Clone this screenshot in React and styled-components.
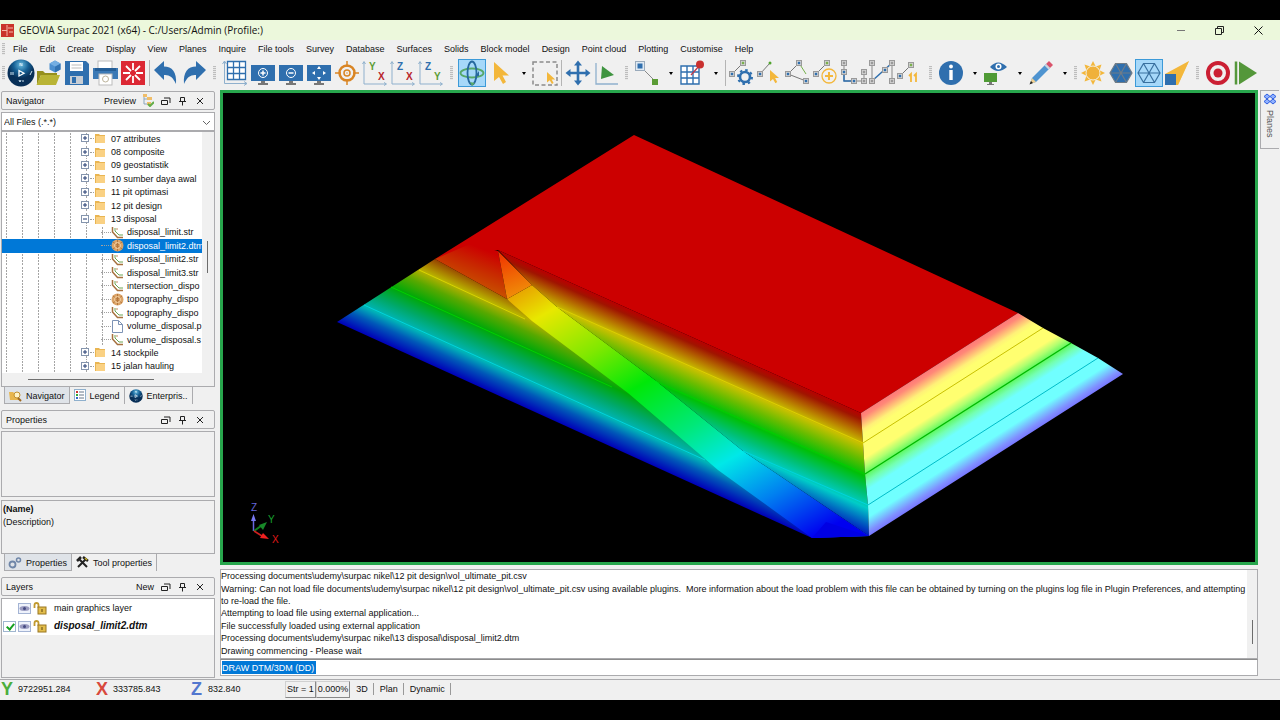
import React from "react";
import styled, { createGlobalStyle, css } from "styled-components";

const Global = createGlobalStyle`
  * { box-sizing: border-box; }
  body { margin: 0; background: #000; color: #111; font: 9px/12px "Liberation Sans", Arial, sans-serif; }
  button, input, select { font: inherit; color: inherit; }
`;

const LINE = "#ababae";
const BLUE = "#2f6fae";
const YEL = "#f3b73b";

/* ---------- frame ---------- */
const Page = styled.div`
  min-height: 100vh;
  display: flex;
  padding: 20px 0;
  background: #000;
`;
const Window = styled.div`
  flex: 1;
  min-width: 0;
  display: flex;
  flex-direction: column;
  background: #f0f0f0;
`;
const TitleBar = styled.header`
  display: flex;
  align-items: center;
  height: 20px;
  padding: 0 2px 0 1px;
  background: #ecf8dc;
  font: 10px/20px "Open Sans", "Noto Sans", sans-serif;
`;
const Title = styled.h1`
  flex: 1;
  margin: 0 0 0 5px;
  font: inherit;
`;
const PlainButton = styled.button`
  display: flex;
  align-items: center;
  justify-content: center;
  padding: 0;
  border: 0;
  background: none;
`;
const CaptionButton = styled(PlainButton)`
  width: 39px;
  height: 20px;
`;
const MenuBar = styled.nav`
  display: flex;
  align-items: center;
  height: 18px;
`;
const MenuList = styled.div`
  display: flex;
  gap: 12px;
  margin-left: 6px;
`;
const MenuItem = styled(PlainButton)`
  white-space: nowrap;
`;
const Toolbar = styled.div`
  display: flex;
  align-items: center;
  height: 32px;
  padding-bottom: 2px;
  overflow: hidden;
`;
const ToolButton = styled(PlainButton)`
  flex: none;
  width: 28px;
  height: 28px;
  ${(p) => p.$on && css`background: #a6d8f9; box-shadow: inset 0 0 0 1px #3c9ad8;`}
`;
const Caret = styled(PlainButton)`
  flex: none;
  width: 17px;
  height: 28px;
  padding-left: 3px;
  &::after {
    content: "";
    border: 2px solid transparent;
    border-top: 3px solid #000;
    border-bottom: 0;
  }
`;
const Grip = styled.span`
  flex: none;
  width: ${(p) => (p.$tight ? 7 : 13)}px;
  display: flex;
  justify-content: center;
  &::before {
    content: "";
    width: 3px;
    height: ${(p) => p.$h || 14}px;
    background: repeating-linear-gradient(#bdbdbd 0 1px, #e8e8e8 1px 2px);
  }
`;
const Divider = styled.span`
  flex: none;
  width: 5px;
  height: 26px;
  background: linear-gradient(#b4b4b4, #b4b4b4) center / 1px 100% no-repeat;
`;

/* ---------- body ---------- */
const Body = styled.main`
  flex: 1;
  min-height: 0;
  display: grid;
  grid-template-columns: 216px minmax(0, 1fr) 20px;
  gap: 0 2px;
`;
const SideBar = styled.aside`
  display: flex;
  flex-direction: column;
  padding: 1px;
`;
const PanelHead = styled.div`
  display: flex;
  align-items: center;
  gap: 6px;
  height: 19px;
  margin-bottom: 2px;
  padding: 0 9px 0 4px;
  border: 1px solid ${LINE};
  border-radius: 2px;
`;
const PanelTitle = styled.h2`
  flex: 1;
  margin: 0;
  font: inherit;
`;
const HeadButton = styled(PlainButton)`
  min-width: 11px;
`;
const Filter = styled.div`
  position: relative;
  display: flex;
  height: 19px;
  border: 1px solid ${LINE};
  background: #fff;
  svg { position: absolute; right: 3px; top: 7px; pointer-events: none; }
`;
const FilterSelect = styled.select`
  flex: 1;
  padding: 0 2px;
  border: 0;
  appearance: none;
  background: transparent;
`;
const TreeBox = styled.div`
  display: grid;
  grid-template-columns: 1fr 12px;
  padding-bottom: 13px;
  border: 1px solid ${LINE};
  background: linear-gradient(#707070, #707070) 26px 247px / 126px 1px no-repeat, #f0f0f0;
`;
const Tree = styled.ul`
  display: grid;
  grid-auto-rows: minmax(0, 1fr);
  height: 241px;
  margin: 0;
  padding: 0;
  min-width: 0;
  overflow: hidden;
  list-style: none;
  background: #fff;
`;
const TreeRow = styled.li`
  display: flex;
  align-items: center;
  padding-left: ${(p) => (p.$file ? 99 : 79)}px;
  white-space: nowrap;
  background-image:
    repeating-linear-gradient(#fff 0 1px, transparent 1px 3px),
    repeating-linear-gradient(90deg, transparent 0 4px, #a4a4a4 4px 5px, transparent 5px 16px);
  background-size: ${(p) => (p.$file ? 101 : 85)}px 100%;
  background-repeat: no-repeat;
  ${(p) => p.$on && css`background: #0078d7; color: #fff;`}
`;
const Branch = styled.span`
  width: ${(p) => p.$w}px;
  border-top: 1px dotted #a0a0a0;
`;
const RowLabel = styled.span`
  margin-left: ${(p) => (p.$file ? 3 : 5)}px;
`;
const ScrollTrack = styled.div`
  background: linear-gradient(#6c6c6c, #6c6c6c) 5px ${(p) => p.$y}px / 1px ${(p) => p.$len}px no-repeat, #f0f0f0;
`;
const Tabs = styled.div`
  display: flex;
  height: 17px;
  padding-left: 3px;
  margin-bottom: 6px;
`;
const Tab = styled.button`
  display: flex;
  align-items: center;
  gap: 4px;
  padding: 0 4px;
  border: 0;
  border-right: 1px solid ${LINE};
  white-space: nowrap;
  background: ${(p) => (p.$on ? "#dfe3e8" : "transparent")};
  ${(p) => p.$on && css`box-shadow: inset 1px -1px 0 ${LINE};`}
`;
const PropertyBox = styled.div`
  height: ${(p) => p.$h}px;
  margin-bottom: ${(p) => p.$gap || 0}px;
  padding: 2px 1px;
  border: 1px solid ${LINE};
  line-height: 12px;
`;
const PropertyName = styled.strong`
  display: block;
  line-height: 13px;
`;
const LayerBox = styled.div`
  flex: 1;
  border: 1px solid ${LINE};
`;
const LayerRow = styled.label`
  display: flex;
  align-items: center;
  gap: 2px;
  height: 18px;
  padding-left: 1px;
  background: #fff;
  font: ${(p) => (p.$active ? "italic bold 10px" : "9px")} / 18px "Liberation Sans", sans-serif;
  span { margin-left: 5px; }
`;
const Tick = styled.input`
  appearance: none;
  width: 13px;
  height: 11px;
  margin: 0;
  &:checked {
    border: 1px solid #9fb6cf;
    background: #fff;
  }
  &:checked::after {
    content: "";
    display: block;
    width: 3px;
    height: 6px;
    margin: 0 0 0 4px;
    border: solid #16a020;
    border-width: 0 2px 2px 0;
    transform: rotate(40deg);
  }
`;

/* ---------- centre ---------- */
const Centre = styled.section`
  display: flex;
  flex-direction: column;
  min-width: 0;
  margin-left: 2px;
`;
const Viewport = styled.div`
  flex: 1;
  min-height: 0;
  display: flex;
  margin-bottom: 4px;
  border: 3px solid #27a64c;
  background: #000;
  svg { width: 100%; height: 100%; max-height: 469px; }
`;
const Console = styled.div`
  display: grid;
  grid-template-columns: 1fr 10px;
  height: 90px;
  border: 1px solid ${LINE};
  background: #fff;
`;
const LogLines = styled.ol`
  display: grid;
  grid-auto-rows: minmax(0, 1fr);
  align-items: center;
  margin: 0;
  padding: 0 0 1px;
  min-width: 0;
  list-style: none;
  white-space: pre;
  overflow: hidden;
`;
const CommandBar = styled.label`
  display: flex;
  align-items: center;
  height: 17px;
  margin-bottom: 3px;
  padding-left: 1px;
  border: 1px solid ${LINE};
  border-top-color: #8c8c8c;
  background: #fff;
`;
const CommandInput = styled.input`
  width: 94px;
  height: 13px;
  padding: 0;
  border: 0;
  background: #0078d7;
  color: #fff;
`;
const DockTab = styled.button`
  display: flex;
  align-items: center;
  gap: 5px;
  height: 59px;
  width: 19px;
  padding: 2px 0 0;
  border: 1px solid ${LINE};
  border-right: 0;
  background: #f0f0f0;
  color: #555;
  writing-mode: vertical-rl;
`;

/* ---------- status ---------- */
const StatusBar = styled.footer`
  display: flex;
  align-items: center;
  height: 21px;
  padding-bottom: 2px;
  border-top: 1px solid ${LINE};
`;
const Coordinate = styled.output`
  display: flex;
  align-items: center;
  gap: 4px;
  width: 95px;
  height: 18px;
  padding-left: 1px;
  white-space: nowrap;
`;
const AxisLetter = styled.b`
  width: 13px;
  color: ${(p) => p.$c};
  font: bold 18px/18px "Liberation Sans", sans-serif;
`;
const StatusBox = styled.span`
  height: 17px;
  padding: 0 1px;
  border: 1px solid #999;
  border-color: #d0d0d0 #888 #888 #d0d0d0;
  line-height: 15px;
`;
const StatusText = styled.span`
  padding: 0 5px 0 6px;
  border-right: 1px solid #999;
`;

/* ---------- toolbar drawings, on a 28 x 28 grid ---------- */
const Svg = ({ s = 28, children }) => (
  <svg width={s} height={s} viewBox="0 0 28 28" fill="none" aria-hidden="true">{children}</svg>
);
const Node = ({ x, y, c = BLUE }) => (
  <g>
    <rect x={x - 2.5} y={y - 2.5} width="5" height="5" fill="#d4d4d4" stroke="#9a9a9a" />
    <rect x={x - 1.2} y={y - 1.2} width="2.4" height="2.4" fill={c} />
  </g>
);
const Cursor = ({ x = 0, y = 0, k = 1 }) => (
  <path transform={`translate(${x} ${y}) scale(${k})`} fill={YEL} d="M0 0V19L5 15L9 22L12 20L8.500 13.500H15Z" />
);
const Screen = ({ children }) => (
  <>
    <rect x="2" y="6" width="24" height="16" fill={BLUE} />
    <path d="M12 22h4v2h3v2H9v-2h3z" fill="#777" />
    {children}
  </>
);
const AxisPair = ({ a, ac, b, bc }) => (
  <>
    <path d="M3 3V25H25M1.500 5L3 2.500L4.500 5M23 23.500L25.500 25L23 26.500" stroke="#8fb0cd" />
    <text x="8" y="11" fontSize="10" fontWeight="bold" fill={ac}>{a}</text>
    <text x="17" y="21" fontSize="10" fontWeight="bold" fill={bc}>{b}</text>
  </>
);
const Hex = ({ fill, line }) => (
  <path d="M8.500 4.500H19.500L25 14L19.500 23.500H8.500L3 14ZM8.500 4.500L19.500 23.500M19.500 4.500L8.500 23.500M3 14H25" fill={fill} stroke={line} strokeWidth="1.200" />
);
const icons = {
  compass: (
    <>
      <defs><radialGradient id="ball" cx=".5" cy=".2"><stop stopColor="#69bce0" /><stop offset=".55" stopColor="#155f94" /><stop offset="1" stopColor="#082f57" /></radialGradient></defs>
      <circle cx="14" cy="14" r="13.500" fill="url(#ball)" />
      <path d="M12 11.500V17L17 14.200Z" stroke="#fff" strokeWidth="1.300" />
      <path d="M13 7V4l2 3V4M4 13v3M6 13v3M23 16l2-4M12 21l1 2 1-2M16 21v2" stroke="#cfe6f3" />
    </>
  ),
  open: (
    <>
      <path d="M2 12h6l2 2h12v2H6L2 26z" fill="#958f1e" />
      <path d="M6 16H25L21 26H1.500Z" fill="#b9b436" />
      <path d="M20 1.500L25.500 4.500V10.500L20 13.500L14.500 10.500V4.500Z" fill="#4c8fcf" />
      <path d="M20 7.500L25.500 4.500V10.500L20 13.500Z" fill="#3273b3" />
      <path d="M20 1.500L25.500 4.500L20 7.500L14.500 4.500Z" fill="#74aee2" />
    </>
  ),
  save: (
    <>
      <path d="M2 2H23L26 5V26H2Z" fill={BLUE} />
      <rect x="7" y="3" width="13" height="9" fill="#fff" /><path d="M8.500 6h10M8.500 9h10" stroke="#bbb" />
      <rect x="7" y="17" width="13" height="8" fill="#c9ced4" /><rect x="9" y="18" width="4" height="6" fill={BLUE} />
    </>
  ),
  print: (
    <>
      <rect x="7" y="2" width="14" height="9" fill="#fff" stroke="#bbb" />
      <rect x="2" y="9" width="25" height="11" fill="#3b79b5" /><rect x="4" y="9" width="21" height="3" fill="#255e96" />
      <rect x="8" y="15" width="13" height="11" fill="#fff" stroke="#bbb" /><circle cx="14.500" cy="20" r="3" stroke="#bcb39a" />
    </>
  ),
  burst: (
    <>
      <rect x="2" y="2" width="24" height="24" fill="#dc2834" />
      <path d="M14 4v7M14 17v7M4 14h7M17 14h7M7 7l5 5M16 16l5 5M21 7l-5 5M12 16l-5 5" stroke="#fff" strokeWidth="1.800" />
    </>
  ),
  undo: <path d="M2 11L12 2V7.500C20 7.500 25 13 24 25C21 18 17 15.500 12 16V21Z" fill={BLUE} />,
  redo: <path d="M26 11L16 2V7.500C8 7.500 3 13 4 25C7 18 11 15.500 16 16V21Z" fill={BLUE} />,
  grid: <><path d="M6.500 2.500h18v18h-18zM12.500 2.500v18M18.500 2.500v18M6.500 8.500h18M6.500 14.500h18" stroke={BLUE} strokeWidth="1.300" fill="#fff" /><path d="M3.500 2V24.500H26M1.500 5l2-3 2 3M23 22.500l3 2-3 2" stroke="#8fb0cd" /></>,
  zoomIn: <Screen><circle cx="14" cy="14" r="4.500" stroke="#fff" /><path d="M11.500 14h5M14 11.500v5" stroke="#fff" strokeWidth="1.500" /></Screen>,
  zoomOut: <Screen><circle cx="14" cy="14" r="4.500" stroke="#fff" /><path d="M11.500 14h5" stroke="#fff" strokeWidth="1.500" /></Screen>,
  zoomAll: <Screen><path d="M14 7l2 3h-4zM14 21l2-3h-4zM7 14l3-2v4zM21 14l-3-2v4z" fill="#fff" /></Screen>,
  centre: <><circle cx="14" cy="14" r="7.500" stroke="#d98524" strokeWidth="2.500" /><circle cx="14" cy="14" r="3" stroke="#d98524" strokeWidth="1.500" /><path d="M14 2v6M14 20v6M2 14h6M20 14h6M13.500 14h1" stroke="#d98524" strokeWidth="1.500" /></>,
  yx: <AxisPair a="Y" ac="#5b9c35" b="X" bc="#b8242c" />,
  zx: <AxisPair a="Z" ac={BLUE} b="X" bc="#b8242c" />,
  zy: <AxisPair a="Z" ac={BLUE} b="Y" bc="#5b9c35" />,
  orbit: <><ellipse cx="14" cy="14" rx="11.500" ry="4.500" stroke="#57a868" strokeWidth="1.800" /><ellipse cx="14" cy="14" rx="4.500" ry="11.500" stroke="#26689e" strokeWidth="1.800" /><path d="M21 12v5l-4 .5zM19 14h-2" fill="#26689e" /><path d="M12 23l5 1-3 3z" fill="#57a868" /></>,
  arrow: <Cursor x={8} y={3} />,
  pick: <><rect x="2" y="3" width="24" height="23" stroke="#8b8b8b" strokeWidth="1.500" strokeDasharray="4 2.500" /><Cursor x={16} y={13} k={0.55} /></>,
  move: <path d="M14 1.500L18 6.500H15.300V12.700H21.500V10L26.500 14L21.500 18V15.300H15.300V21.500H18L14 26.500L10 21.500H12.700V15.300H6.500V18L1.500 14L6.500 10V12.700H12.700V6.500H10Z" fill={BLUE} />,
  plane: <><path d="M4 4V25H26" stroke="#8fb0cd" strokeWidth="1.300" /><path d="M10 7L22 16L9 20Z" fill="#3f9440" /></>,
  points: <><path d="M8 8L22 22" stroke="#888" /><rect x="2.500" y="2.500" width="9" height="9" fill="#dfe9f2" stroke="#9ab" /><rect x="4.500" y="4.500" width="5" height="5" fill={BLUE} /><rect x="19" y="20" width="6" height="6" fill="#5b9c35" /></>,
  pin: <><path d="M3 7h18v18H3zM9 7v18M15 7v18M3 13h18M3 19h18" stroke={BLUE} strokeWidth="1.400" fill="#fff" /><path d="M13 16L22 6" stroke="#c0394a" strokeWidth="1.300" /><circle cx="22" cy="5.500" r="4" fill="#c9302f" /></>,
  lineGear: <><path d="M4 15L15 4" stroke="#777" /><Node x={4} y={15} /><Node x={15} y={4} c="#7ab04c" /><circle cx="17" cy="18" r="5" stroke={BLUE} strokeWidth="2.600" /><circle cx="17" cy="18" r="7" stroke={BLUE} strokeWidth="2" strokeDasharray="2.500 3" /></>,
  linePick: <><path d="M4 15L14 4" stroke="#777" /><Node x={4} y={15} /><circle cx="14" cy="4" r="1.500" fill="#4fa32d" /><Cursor x={14} y={11} k={0.6} /></>,
  closeLine: <><path d="M4 15L15 4" stroke="#777" /><path d="M15 4L22 15" stroke="#74b04a" /><path d="M4 15L22 22" stroke="#777" /><Node x={4} y={15} /><Node x={15} y={4} /><Node x={22} y={22} /></>,
  addLine: <><path d="M4 15L15 4" stroke="#777" /><Node x={4} y={15} /><Node x={15} y={4} c="#7ab04c" /><circle cx="17" cy="17" r="7" stroke={YEL} strokeWidth="1.300" /><path d="M13 17h8M17 13v8" stroke={YEL} strokeWidth="2" /></>,
  lShape: <><path d="M4 4V22H24V13" stroke="#888" /><path d="M4 13V22H14" stroke={BLUE} strokeWidth="1.500" /><Node x={4} y={4} c="#999" /><Node x={4} y={13} /><Node x={14} y={22} /><Node x={24} y={22} c="#999" /><Node x={24} y={13} c="#999" /></>,
  nShape: <><path d="M4 4V22M24 4V22" stroke="#888" /><path d="M4 22L24 4" stroke={BLUE} strokeWidth="1.500" /><Node x={4} y={4} c="#999" /><Node x={4} y={22} c="#999" /><Node x={17} y={11} /><Node x={24} y={4} c="#999" /><Node x={24} y={22} c="#999" /></>,
  renumber: <><path d="M4 17L15 6" stroke="#777" /><Node x={4} y={17} /><Node x={15} y={6} c="#7ab04c" /><path d="M13 17l2-2v8M18 17l2-2v8" stroke={YEL} strokeWidth="1.800" /></>,
  info: <><circle cx="14" cy="14" r="12" fill={BLUE} /><circle cx="14" cy="7.500" r="1.900" fill="#fff" /><rect x="12.300" y="11" width="3.400" height="10" fill="#fff" /></>,
  eye: <><path d="M8 8Q16-1 25 8Q16 16 8 8Z" fill={BLUE} /><circle cx="16.500" cy="7.500" r="3" fill="#fff" /><circle cx="16.500" cy="7.500" r="1.500" fill={BLUE} /><rect x="2" y="14" width="13" height="9" fill="#4f9a35" /><path d="M7 23h3v2h2v1H5v-1h2z" fill="#777" /></>,
  pencil: <><path d="M3 25L5 19L19 5L23 9L9 23Z" fill="#4f94d0" /><path d="M19 5L22 2L26 6L23 9Z" fill="#d9536b" /><path d="M17.500 6.500L21.500 10.500L23 9L19 5Z" fill="#ccd5de" /><path d="M5 19L9 23L3 25Z" fill="#f0d092" /><path d="M4 22l2 2-3.500 1.500z" fill="#222" /></>,
  sun: <><g fill={YEL}>{[0, 45, 90, 135, 180, 225, 270, 315].map((a) => <path key={a} d="M14 2L17 8H11Z" transform={`rotate(${a} 14 14)`} />)}</g><circle cx="14" cy="14" r="7" fill="#f0b13a" stroke="#f5f0e0" /></>,
  hexSolid: <Hex fill={BLUE} line="#6f7c88" />,
  hexWire: <Hex fill="none" line="#39709f" />,
  beam: <><path d="M9 16L26 2L15 26Z" fill="#f7cf70" /><path d="M26 2L2 15H13V26L15 26Z" fill={YEL} /><rect x="2" y="15" width="11" height="11" fill={BLUE} /></>,
  record: <><circle cx="14" cy="14" r="10" stroke="#cb1f33" strokeWidth="4" /><circle cx="14" cy="14" r="4.500" fill="#cb1f33" /></>,
  play: <><path d="M4 2.500v23" stroke="#54973a" strokeWidth="2.500" /><path d="M7 2.500L25 14L7 25.500Z" fill="#54973a" /></>,
};
const toolbar = [
  "gripT", "compass", "open", "save", "print", "burst", "|", "undo", "redo",
  "grip", "grid", "zoomIn", "zoomOut", "zoomAll", "centre", "yx", "zx", "zy",
  "grip", "orbit", "arrow", "v", "pick", "|", "move", "plane",
  "grip", "points", "v", "pin", "v", "|", "lineGear", "linePick", "closeLine", "addLine", "lShape", "nShape", "renumber",
  "grip", "info", "v", "eye", "v", "pencil", "v",
  "gripT", "sun", "hexSolid", "hexWire", "beam", "grip", "record", "play",
];
const active = ["orbit", "hexWire"];
const menus = ["File", "Edit", "Create", "Display", "View", "Planes", "Inquire", "File tools", "Survey", "Database", "Surfaces", "Solids", "Block model", "Design", "Point cloud", "Plotting", "Customise", "Help"];

/* ---------- small drawings ---------- */
const Expander = ({ open }) => (
  <svg width="9" height="9" fill="none" aria-hidden="true"><rect x=".5" y=".5" width="7" height="7" fill="#fff" stroke="#8595ad" /><path d={open ? "M2 4h4" : "M2 4h4M4 2v4"} stroke="#223a70" /></svg>
);
const Folder = () => (
  <svg width="12" height="11" aria-hidden="true"><path d="M1 1h4l1 1h5v8H1z" fill="#e9b552" /><path d="M2 3h9v7H2z" fill="#fad183" /></svg>
);
const FileIcon = ({ kind }) => (
  <svg width="13" height="13" fill="none" aria-hidden="true">
    {kind === "str" && <><path d="M1.500 1V6L6.500 11.500H12" stroke="#a6713f" strokeWidth="1.500" /><path d="M4 2V5L8 9H12" stroke="#6aa552" /><path d="M6 2V4" stroke="#c88b63" /></>}
    {kind === "dtm" && <><circle cx="6.500" cy="6.500" r="6" fill="#dba468" /><path d="M2 3l9 7M11 3L2 10M6.500 1v11" stroke="#b5763c" /><circle cx="6.500" cy="6.500" r="3" stroke="#f5d3a5" /></>}
    {kind === "doc" && <path d="M1.500 .5h6l4 4v8h-10zM7.500 .5v4h4" fill="#fff" stroke="#7d93b5" />}
  </svg>
);
const Dock = () => <svg width="10" height="10" fill="none" aria-hidden="true"><path d="M.5 4.500h6v4h-6zM3 2h6v5" stroke="#222" /></svg>;
const Pin = () => <svg width="9" height="10" fill="none" aria-hidden="true"><path d="M2.500 1.500h4v4h-4zM1 5.500h7M4.500 6v3.500" stroke="#222" /></svg>;
const Cross = () => <svg width="8" height="8" fill="none" aria-hidden="true"><path d="M1 1l6 6M7 1L1 7" stroke="#222" /></svg>;
const EyeBox = () => <svg width="13" height="11" aria-hidden="true"><rect x=".5" y=".5" width="12" height="10" fill="#eef2fb" stroke="#a4b4d4" /><ellipse cx="6.500" cy="5.500" rx="5" ry="2.500" fill="#9a9bc0" /><circle cx="6.500" cy="5.500" r="1.500" fill="#444a80" /></svg>;
const Lock = () => <svg width="14" height="13" fill="none" aria-hidden="true"><path d="M1.500 6V3Q1.500 1 3.500 1T5.500 3V6" stroke="#c19a2f" strokeWidth="1.800" /><rect x="5" y="5" width="8" height="7" fill="#e2bd4c" stroke="#9a7720" /><path d="M9 7v3" stroke="#5c4510" /></svg>;

const Head = ({ title, extra, tree }) => (
  <PanelHead>
    <PanelTitle>{title}</PanelTitle>
    {extra && <HeadButton>{extra}</HeadButton>}
    {tree && <HeadButton aria-label="Toggle preview"><svg width="12" height="13" fill="none"><path d="M2 1v9h4M2 5h4" stroke="#8ba6bd" /><rect x="5" y="3" width="5" height="3" fill="#f0bd69" /><rect x="5" y="8" width="4" height="3" fill="#f0bd69" /><path d="M6 10l2 2 4-4" stroke="#63ad47" strokeWidth="2" /><rect x="1" y="0" width="4" height="3" fill="#f0bd69" /></svg></HeadButton>}
    <HeadButton aria-label="Float"><Dock /></HeadButton>
    <HeadButton aria-label="Pin"><Pin /></HeadButton>
    <HeadButton aria-label="Close"><Cross /></HeadButton>
  </PanelHead>
);

const tree = [
  ["07 attributes"], ["08 composite"], ["09 geostatistik"], ["10 sumber daya awal"], ["11 pit optimasi"], ["12 pit design"], ["13 disposal"],
  ["disposal_limit.str", "str"], ["disposal_limit2.dtm", "dtm"], ["disposal_limit2.str", "str"], ["disposal_limit3.str", "str"],
  ["intersection_dispo", "str"], ["topography_dispo", "dtm"], ["topography_dispo", "str"],
  ["volume_disposal.p", "doc"], ["volume_disposal.s", "str"], ["14 stockpile"], ["15 jalan hauling"],
];
const log = [
  "Processing documents\\udemy\\surpac nikel\\12 pit design\\vol_ultimate_pit.csv",
  "Warning: Can not load file documents\\udemy\\surpac nikel\\12 pit design\\vol_ultimate_pit.csv using available plugins.  More information about the load problem with this file can be obtained by turning on the plugins log file in Plugin Preferences, and attempting",
  "to re-load the file.",
  "Attempting to load file using external application...",
  "File successfully loaded using external application",
  "Processing documents\\udemy\\surpac nikel\\13 disposal\\disposal_limit2.dtm",
  "Drawing commencing - Please wait",
];

const Grad = ({ id, v, stops }) => (
  <linearGradient id={id} gradientUnits="userSpaceOnUse" x1={v[0]} y1={v[1]} x2={v[2]} y2={v[3]}>
    {stops.map(([o, c]) => <stop key={o} offset={o} stopColor={c} />)}
  </linearGradient>
);
const Model = () => (
  <svg viewBox="223 93 1032 469" role="img" aria-label="Disposal surface model coloured by elevation">
    <defs>
      <Grad id="left" v={[337, 202, 291.8, 301.5]} stops={[[0, "#a80000"], [0.06, "#8c2000"], [0.25, "#b8b000"], [0.36, "#58a800"], [0.5, "#00a808"], [0.64, "#00a868"], [0.77, "#00b4b8"], [0.87, "#0058b8"], [1, "#0000b8"]]} />
      <Grad id="front" v={[861, 413, 815.2, 515.6]} stops={[[0, "#b80000"], [0.05, "#a01400"], [0.25, "#c8c000"], [0.37, "#68bc00"], [0.5, "#00c008"], [0.64, "#00c078"], [0.75, "#00ccc8"], [0.88, "#0060c0"], [1, "#0000c0"]]} />
      <Grad id="right" v={[861, 413, 919, 504]} stops={[[0, "#ff7878"], [0.04, "#ff8878"], [0.14, "#fff078"], [0.18, "#ffff70"], [0.37, "#ffff70"], [0.44, "#b0ff70"], [0.5, "#60f860"], [0.56, "#74ffb0"], [0.63, "#70ffff"], [0.85, "#70ffff"], [0.96, "#8090ff"], [1, "#7878ff"]]} />
      <Grad id="ramp" v={[469.3, 231.8, 681.5, 610.7]} stops={[[0, "#e00000"], [0.17, "#e8a000"], [0.25, "#e8e800"], [0.38, "#80e800"], [0.5, "#00e808"], [0.64, "#00e878"], [0.75, "#00e8e8"], [0.87, "#0080f0"], [1, "#0000f0"]]} />
      <Grad id="tip" v={[498, 252, 514, 296]} stops={[[0, "#f03000"], [1, "#f08c08"]]} />
      <Grad id="ledge" v={[475, 246, 458, 290]} stops={[[0, "#cc0000"], [0.35, "#c82400"], [1, "#c86400"]]} />
    </defs>
    <path d="M634 135L1018 313L861 413L498 250L435 259Z" fill="#cc0000" />
    <path d="M435 259L337 322L812 538L869 536L507 299Z" fill="url(#left)" />
    <path d="M498 250L861 413L863 443L865 474L868 505L869 536L743 451L655 380L557 307L532 285Z" fill="url(#front)" />
    <path d="M435 259L470 244L498 251L507 299Z" fill="url(#ledge)" />
    <path d="M419 270L525 319" stroke="#d8d400" />
    <path d="M557 307L863 443" stroke="#dcd000" />
    <path d="M391 287L612 387M655 381L865 474" stroke="#00d000" />
    <path d="M364 305L705 460M743 451L868 505" stroke="#00d4dc" />
    <path d="M507 299L532 285L557 307L655 380L743 451L869 536L812 538L718 470L628 393L532 321Z" fill="url(#ramp)" />
    <path d="M826 522L869 536L812 538Z" fill="#0000e4" />
    <path d="M498 251L532 285L507 299Z" fill="url(#tip)" />
    <path d="M861 413L1018 313L1043 328L1071 343L1098 358L1123 374L869 536L868 505L865 474L863 443Z" fill="url(#right)" />
    <path d="M863 443L1043 328" stroke="#c8c000" />
    <path d="M865 474L1071 343" stroke="#00b800" strokeWidth="1.300" />
    <path d="M868 505L1098 358" stroke="#00bcc8" />
    <path d="M253.500 531V519" stroke="#6868e0" strokeWidth="1.500" /><path d="M253.500 514L256 521H251Z" fill="#7878f0" />
    <path d="M254 531L261 526" stroke="#108020" strokeWidth="2" /><path d="M267 522L263 530L259 525Z" fill="#188828" />
    <path d="M254 531L262 536" stroke="#d02020" strokeWidth="1.500" /><path d="M269 539L260 538L263 533Z" fill="#f02020" />
    <g fontFamily="Liberation Sans, sans-serif" fontSize="10"><text x="251" y="511" fill="#6464d8">Z</text><text x="268" y="523" fill="#18a030">Y</text><text x="272" y="543" fill="#e01818">X</text></g>
  </svg>
);

export default function App() {
  return (
    <Page>
      <Global />
      <Window>
        <TitleBar>
          <svg width="13" height="13" aria-hidden="true"><rect width="13" height="13" fill="#c9352b" /><path d="M6 1v11M1 6.500h5M7 4h5M8 8h4" stroke="#f4b8a8" /></svg>
          <Title>GEOVIA Surpac 2021 (x64) - C:/Users/Admin (Profile:)</Title>
          <CaptionButton aria-label="Minimise"><svg width="8" height="8"><path d="M0 4.500h8" stroke="#777" /></svg></CaptionButton>
          <CaptionButton aria-label="Restore"><svg width="9" height="9" fill="none"><path d="M.5 2.500h6v6h-6zM2.500 2V.5h6v6H7" stroke="#222" /></svg></CaptionButton>
          <CaptionButton aria-label="Close window"><svg width="9" height="9"><path d="M.5 .5l8 8M8.500 .5l-8 8" stroke="#111" /></svg></CaptionButton>
        </TitleBar>
        <MenuBar>
          <Grip $tight $h={12} />
          <MenuList>{menus.map((m) => <MenuItem key={m}>{m}</MenuItem>)}</MenuList>
        </MenuBar>
        <Toolbar>
          {toolbar.map((t, i) => {
            if (t === "grip" || t === "gripT") return <Grip key={i} $tight={t === "gripT"} />;
            if (t === "|") return <Divider key={i} />;
            if (t === "v") return <Caret key={i} aria-label="More options" />;
            return <ToolButton key={i} aria-label={t} $on={active.includes(t)}><Svg>{icons[t]}</Svg></ToolButton>;
          })}
        </Toolbar>
        <Body>
          <SideBar>
            <Head title="Navigator" extra="Preview" tree />
            <Filter>
              <FilterSelect aria-label="File type"><option>All Files (.*.*)</option></FilterSelect>
              <svg width="9" height="6" fill="none"><path d="M1 1l3.500 3.500L8 1" stroke="#666" /></svg>
            </Filter>
            <TreeBox>
              <Tree>
                {tree.map(([name, kind], i) => (
                  <TreeRow key={i} $file={kind} $on={name === "disposal_limit2.dtm"}>
                    {kind ? <><Branch $w={10} /><FileIcon kind={kind} /></> : <><Expander open={i === 6} /><Branch $w={4} /><Folder /></>}
                    <RowLabel $file={kind}>{name}</RowLabel>
                  </TreeRow>
                ))}
              </Tree>
              <ScrollTrack $y={109} $len={32} />
            </TreeBox>
            <Tabs>
              <Tab $on><svg width="14" height="13"><path d="M1 3h4l1 1h5v7H2z" fill="#e8b64e" /><circle cx="9" cy="6" r="3" fill="#fff3c8" stroke="#c09030" /><path d="M10 9l3 3" stroke="#a06a20" strokeWidth="2" /></svg>Navigator</Tab>
              <Tab><svg width="12" height="13"><rect x=".5" y=".5" width="11" height="11" fill="#fff" stroke="#8fb0cd" /><path d="M2 3h2" stroke="#c33" strokeWidth="2" /><path d="M2 6h2" stroke="#3a3" strokeWidth="2" /><path d="M2 9h2" stroke="#36c" strokeWidth="2" /><path d="M5 3h5M5 6h5M5 9h5" stroke="#678" /></svg>Legend</Tab>
              <Tab><Svg s={14}>{icons.compass}</Svg>Enterpris..</Tab>
            </Tabs>
            <Head title="Properties" />
            <PropertyBox $h={66} $gap={3} />
            <PropertyBox $h={54}><PropertyName>(Name)</PropertyName>(Description)</PropertyBox>
            <Tabs>
              <Tab $on><svg width="14" height="13" fill="none"><circle cx="4.500" cy="8.500" r="3" stroke="#6f86a8" strokeWidth="1.800" /><circle cx="10.500" cy="4" r="2" stroke="#6f86a8" strokeWidth="1.500" /></svg>Properties</Tab>
              <Tab><svg width="13" height="13" fill="none"><path d="M2 11L10 3M3 3l8 8" stroke="#222" strokeWidth="2" /><path d="M7 1l5 4M1 5l4-4" stroke="#222" strokeWidth="2.500" /><path d="M9 2l2 2" stroke="#c8b020" strokeWidth="1.500" /></svg>Tool properties</Tab>
            </Tabs>
            <Head title="Layers" extra="New" />
            <LayerBox>
              <LayerRow><Tick type="checkbox" /><EyeBox /><Lock /><span>main graphics layer</span></LayerRow>
              <LayerRow $active><Tick type="checkbox" defaultChecked /><EyeBox /><Lock /><span>disposal_limit2.dtm</span></LayerRow>
            </LayerBox>
          </SideBar>
          <Centre>
            <Viewport><Model /></Viewport>
            <Console>
              <LogLines>{log.map((l) => <li key={l}>{l}</li>)}</LogLines>
              <ScrollTrack $y={50} $len={24} />
            </Console>
            <CommandBar><CommandInput aria-label="Command" defaultValue="DRAW DTM/3DM (DD)" /></CommandBar>
          </Centre>
          <DockTab>
            <svg width="12" height="12" fill="none"><path d="M3 1l3 2.500L3 6 0 3.500zM9 1l3 2.500L9 6 6 3.500zM3 6l3 2.500L3 11 0 8.500zM9 6l3 2.500L9 11 6 8.500z" fill="#8fb0ff" stroke="#2f5fe0" /></svg>
            Planes
          </DockTab>
        </Body>
        <StatusBar>
          <Coordinate><AxisLetter $c="#4cae3c">Y</AxisLetter>9722951.284</Coordinate>
          <Coordinate><AxisLetter $c="#d8493c">X</AxisLetter>333785.843</Coordinate>
          <Coordinate><AxisLetter $c="#5277cf">Z</AxisLetter>832.840</Coordinate>
          <StatusBox>Str = 1</StatusBox>
          <StatusBox>0.000%</StatusBox>
          <StatusText>3D</StatusText>
          <StatusText>Plan</StatusText>
          <StatusText>Dynamic</StatusText>
        </StatusBar>
      </Window>
    </Page>
  );
}
